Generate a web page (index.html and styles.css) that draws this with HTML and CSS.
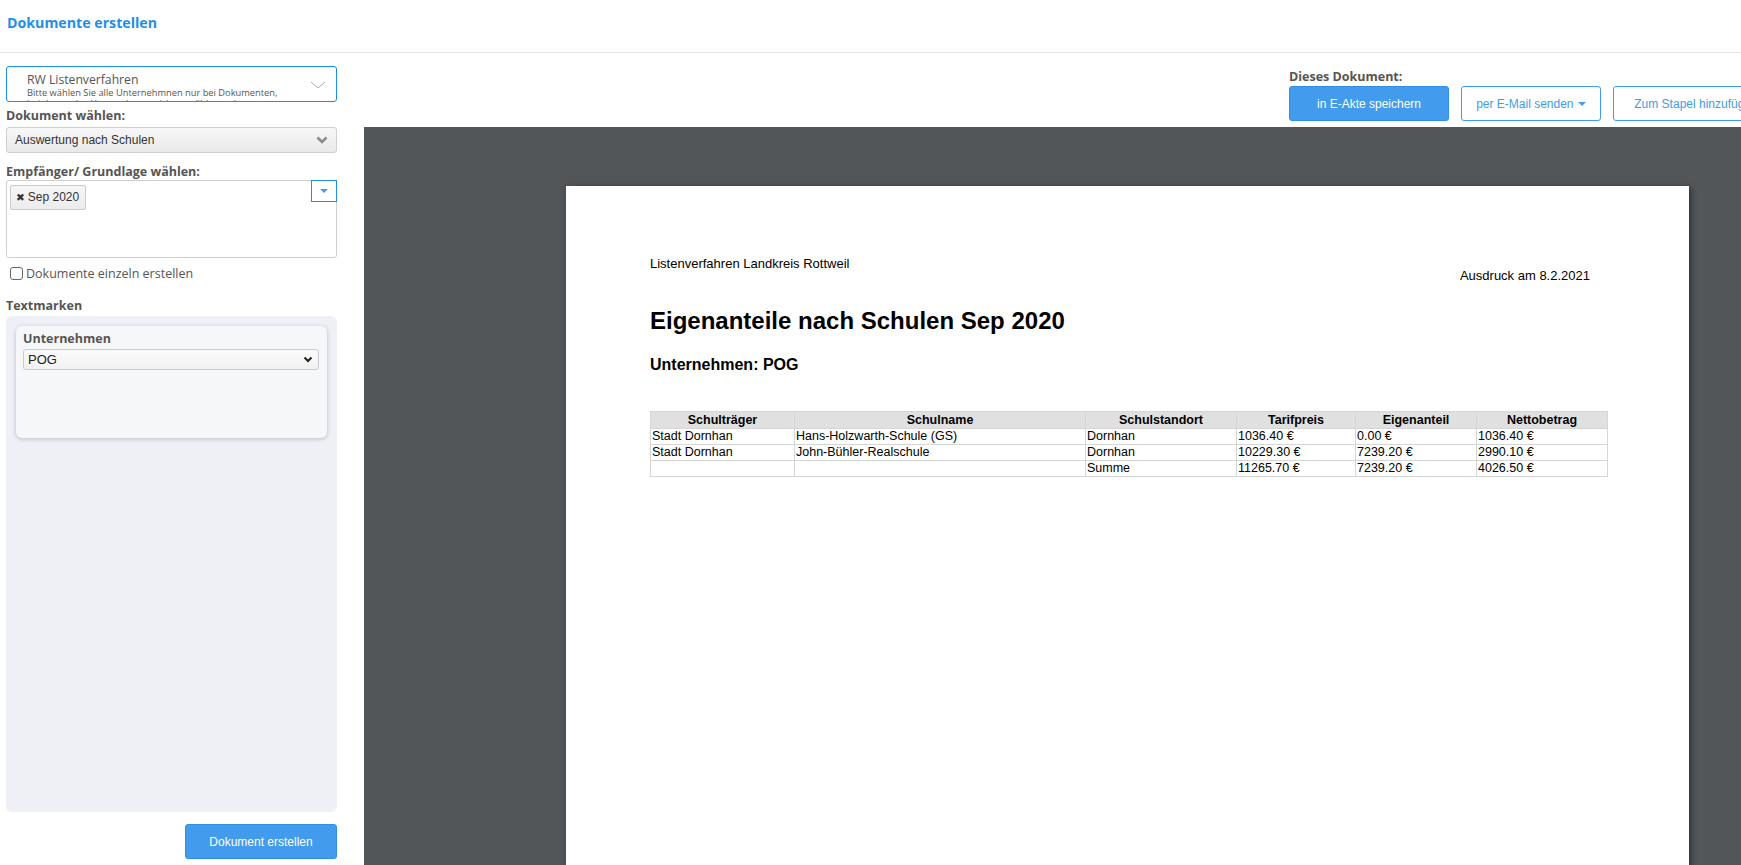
FILE: index.html
```html
<!DOCTYPE html>
<html lang="de">
<head>
  <meta charset="UTF-8">
  <meta name="viewport" content="width=device-width, initial-scale=1.0">
  <title>Dokumente erstellen</title>
  <link rel="stylesheet" href="styles.css">
</head>
<body>
  <header class="topbar">
    <h1 class="page-title">Dokumente erstellen</h1>
  </header>

  <div class="main">
    <!-- left: form -->
    <aside class="sidebar">
      <div class="scheme-select">
        <div class="scheme-name">RW Listenverfahren</div>
        <div class="scheme-hint">Bitte wählen Sie alle Unternehmnen nur bei Dokumenten, bei denen das Unternehmen nicht gewählt werden muss.</div>
        <svg class="scheme-chevron" width="16" height="8" viewBox="0 0 16 8"><path d="M1 1l7 6 7-6" fill="none" stroke="#a9a9a9" stroke-width="1"/></svg>
      </div>

      <div class="field-label">Dokument wählen:</div>
      <div class="select-box">
        <span>Auswertung nach Schulen</span>
        <svg width="12" height="8" viewBox="0 0 12 8"><path d="M1.5 1.5l4.5 4.5 4.5-4.5" fill="none" stroke="#8a8a8a" stroke-width="2.6"/></svg>
      </div>

      <div class="field-label spaced">Empfänger/ Grundlage wählen:</div>
      <div class="multi-box">
        <span class="tag"><span class="tag-x">&#10006;</span>Sep 2020</span>
        <span class="multi-toggle">
          <svg width="8" height="5" viewBox="0 0 8 5"><path d="M0 0h8L4 4z" fill="#429bed"/></svg>
        </span>
      </div>

      <label class="check-row">
        <input type="checkbox" class="check">
        <span>Dokumente einzeln erstellen</span>
      </label>

      <div class="field-label section">Textmarken</div>
      <div class="panel">
        <div class="card">
          <div class="card-label">Unternehmen</div>
          <div class="small-select">
            <span>POG</span>
            <svg width="10" height="7" viewBox="0 0 10 7"><path d="M1.5 1.5l3.5 3.5 3.5-3.5" fill="none" stroke="#222" stroke-width="2"/></svg>
          </div>
        </div>
      </div>

      <div class="submit-row">
        <button class="btn btn-primary btn-submit">Dokument erstellen</button>
      </div>
    </aside>

    <!-- right: preview -->
    <section class="preview">
      <div class="toolbar">
        <div class="doc-actions">
          <div class="field-label">Dieses Dokument:</div>
          <div class="action-buttons">
            <button class="btn btn-primary btn-akte">in E-Akte speichern</button>
            <button class="btn btn-outline btn-mail">per E-Mail senden <span class="caret"></span></button>
            <button class="btn btn-outline btn-stapel">Zum Stapel hinzufügen</button>
          </div>
        </div>
      </div>

      <div class="viewer">
        <div class="sheet">
          <div class="sheet-head">
            <div>Listenverfahren Landkreis Rottweil</div>
            <div class="print-date">Ausdruck am 8.2.2021</div>
          </div>
          <h2 class="sheet-title">Eigenanteile nach Schulen Sep 2020</h2>
          <h3 class="sheet-sub">Unternehmen: POG</h3>

          <table class="report">
            <colgroup>
              <col style="width:144px">
              <col style="width:291px">
              <col style="width:151px">
              <col style="width:119px">
              <col style="width:121px">
              <col style="width:131px">
            </colgroup>
            <thead>
              <tr>
                <th>Schulträger</th>
                <th>Schulname</th>
                <th>Schulstandort</th>
                <th>Tarifpreis</th>
                <th>Eigenanteil</th>
                <th>Nettobetrag</th>
              </tr>
            </thead>
            <tbody>
              <tr>
                <td>Stadt Dornhan</td>
                <td>Hans-Holzwarth-Schule (GS)</td>
                <td>Dornhan</td>
                <td>1036.40 €</td>
                <td>0.00 €</td>
                <td>1036.40 €</td>
              </tr>
              <tr>
                <td>Stadt Dornhan</td>
                <td>John-Bühler-Realschule</td>
                <td>Dornhan</td>
                <td>10229.30 €</td>
                <td>7239.20 €</td>
                <td>2990.10 €</td>
              </tr>
              <tr>
                <td></td>
                <td></td>
                <td>Summe</td>
                <td>11265.70 €</td>
                <td>7239.20 €</td>
                <td>4026.50 €</td>
              </tr>
            </tbody>
          </table>
        </div>
      </div>
    </section>
  </div>
</body>
</html>
```

FILE: styles.css
```css
body {
  margin: 0;
  width: 1741px;
  height: 865px;
  overflow: hidden;
  background: #fff;
  font-family: "Open Sans", "Liberation Sans", sans-serif;
  color: #555;
}

.topbar {
  height: 52px;
  border-bottom: 1px solid #dde3ea;
  padding-left: 7px;
}

.page-title {
  margin: 0;
  padding-top: 13px;
  font-size: 14.2px;
  line-height: 20px;
  font-weight: bold;
  color: #1e8fe8;
}

.main {
  display: flex;
}

/* sidebar */
.sidebar {
  flex: none;
  width: 331px;
  padding: 13px 0 0 6px;
}

.scheme-select {
  position: relative;
  box-sizing: border-box;
  height: 36px;
  border: 1px solid #1e8fe8;
  border-radius: 3px;
  padding: 4px 50px 0 20px;
  overflow: hidden;
}

.scheme-name {
  font-size: 12.2px;
  line-height: 17px;
  color: #555;
}

.scheme-hint {
  font-size: 9.3px;
  line-height: 10.5px;
  color: #555;
}

.scheme-chevron {
  position: absolute;
  right: 10px;
  top: 14px;
}

.field-label {
  font-size: 12.5px;
  font-weight: bold;
  line-height: 18px;
  color: #555;
  margin-top: 5px;
  margin-bottom: 2px;
}

.field-label.spaced {
  margin-top: 10px;
  margin-bottom: 0;
  line-height: 17px;
}

.field-label.section {
  margin-top: 16px;
  margin-bottom: 1px;
}

.select-box {
  box-sizing: border-box;
  height: 26px;
  display: flex;
  align-items: center;
  justify-content: space-between;
  padding: 0 8px;
  border: 1px solid #cfcfcf;
  border-radius: 3px;
  background: linear-gradient(#f7f7f7, #e9e9e9);
  font-family: "Liberation Sans", Arial, sans-serif;
  font-size: 12px;
  color: #333;
}

.multi-box {
  position: relative;
  box-sizing: border-box;
  height: 78px;
  border: 1px solid #cfcfcf;
  border-radius: 3px;
  padding: 3px;
}

.tag {
  display: inline-flex;
  align-items: center;
  box-sizing: border-box;
  height: 25px;
  width: 76px;
  padding: 0 5px;
  border: 1px solid #ccc;
  border-radius: 2px;
  background: linear-gradient(#f6f6f6, #ececec);
  font-family: "Liberation Sans", Arial, sans-serif;
  font-size: 12px;
  color: #333;
}

.tag-x {
  font-family: "DejaVu Sans", sans-serif;
  font-size: 10.5px;
  margin-right: 3px;
}

.multi-toggle {
  position: absolute;
  top: -1px;
  right: -1px;
  box-sizing: border-box;
  width: 26px;
  height: 22px;
  border: 1px solid #1e8fe8;
  display: flex;
  align-items: center;
  justify-content: center;
  background: #fff;
}

.check-row {
  display: flex;
  align-items: center;
  gap: 3px;
  height: 16px;
  margin-top: 7px;
  padding-left: 4px;
  font-size: 12.5px;
  color: #555;
}

.check {
  appearance: none;
  margin: 0;
  width: 13px;
  height: 13px;
  border: 1px solid #666;
  border-radius: 3px;
  background: #fff;
}

.panel {
  box-sizing: border-box;
  height: 496px;
  padding: 10px 10px;
  background: #eff0f5;
  border-radius: 6px;
}

.card {
  box-sizing: border-box;
  height: 112px;
  padding: 4px 8px 0 7px;
  background: #f6f7f9;
  border-radius: 6px;
  box-shadow: 0 1px 4px rgba(0, 0, 0, 0.22);
}

.card-label {
  font-size: 12.5px;
  font-weight: bold;
  line-height: 18px;
  color: #555;
  margin-bottom: 1px;
}

.small-select {
  box-sizing: border-box;
  height: 21px;
  display: flex;
  align-items: center;
  justify-content: space-between;
  padding: 0 5px 0 4px;
  border: 1px solid #c9ccd3;
  border-radius: 3px;
  background: linear-gradient(#fbfbfb, #f1f1f1);
  font-family: "Liberation Sans", Arial, sans-serif;
  font-size: 13px;
  color: #222;
}

.submit-row {
  display: flex;
  justify-content: flex-end;
  margin-top: 12px;
}

.btn {
  box-sizing: border-box;
  height: 35px;
  border-radius: 3px;
  font-family: "Liberation Sans", Arial, sans-serif;
  font-size: 12px;
  cursor: pointer;
}

.btn-primary {
  background: #429bed;
  border: 1px solid #2f8fe6;
  color: #fff;
}

.btn-outline {
  background: #fff;
  border: 1px solid #429bed;
  color: #429bed;
}

.btn-submit {
  width: 152px;
}

/* preview side */
.preview {
  flex: none;
  width: 1527px;
  margin-left: 27px;
}

.toolbar {
  height: 74px;
  box-sizing: border-box;
  padding: 15px 0 0 925px;
}

.doc-actions .field-label {
  margin: 0;
}

.action-buttons {
  display: flex;
  gap: 12px;
}

.btn-akte {
  width: 160px;
}

.btn-mail {
  width: 140px;
}

.btn-stapel {
  width: 166px;
}

.caret {
  display: inline-block;
  vertical-align: middle;
  border-top: 4px solid #429bed;
  border-left: 4px solid transparent;
  border-right: 4px solid transparent;
  margin-left: 1px;
}

.viewer {
  height: 738px;
  box-sizing: border-box;
  padding-top: 59px;
  background: #525659;
  overflow: hidden;
}

.sheet {
  width: 1123px;
  height: 794px;
  box-sizing: border-box;
  margin: 0 auto;
  padding: 70px 82px 0 84px;
  background: #fff;
  box-shadow: 2px 2px 6px rgba(0, 0, 0, 0.45);
  font-family: "Liberation Sans", Arial, sans-serif;
  color: #000;
}

.sheet-head {
  display: flex;
  justify-content: space-between;
  align-items: flex-start;
  font-size: 13px;
  line-height: 15px;
}

.print-date {
  margin-top: 12px;
  margin-right: 17px;
}

.sheet-title {
  margin: 24px 0 0;
  font-size: 24px;
  line-height: 28px;
}

.sheet-sub {
  margin: 20px 0 0;
  font-size: 16px;
  line-height: 19px;
}

.report {
  margin-top: 37px;
  width: 957px;
  border-collapse: collapse;
  table-layout: fixed;
  font-size: 12.5px;
}

.report th,
.report td {
  border: 1px solid #d6d6d6;
  padding: 0 1px;
  line-height: 15px;
  text-align: left;
  white-space: nowrap;
}

.report th {
  background: #e0e0e0;
  text-align: center;
  line-height: 16px;
}
```
